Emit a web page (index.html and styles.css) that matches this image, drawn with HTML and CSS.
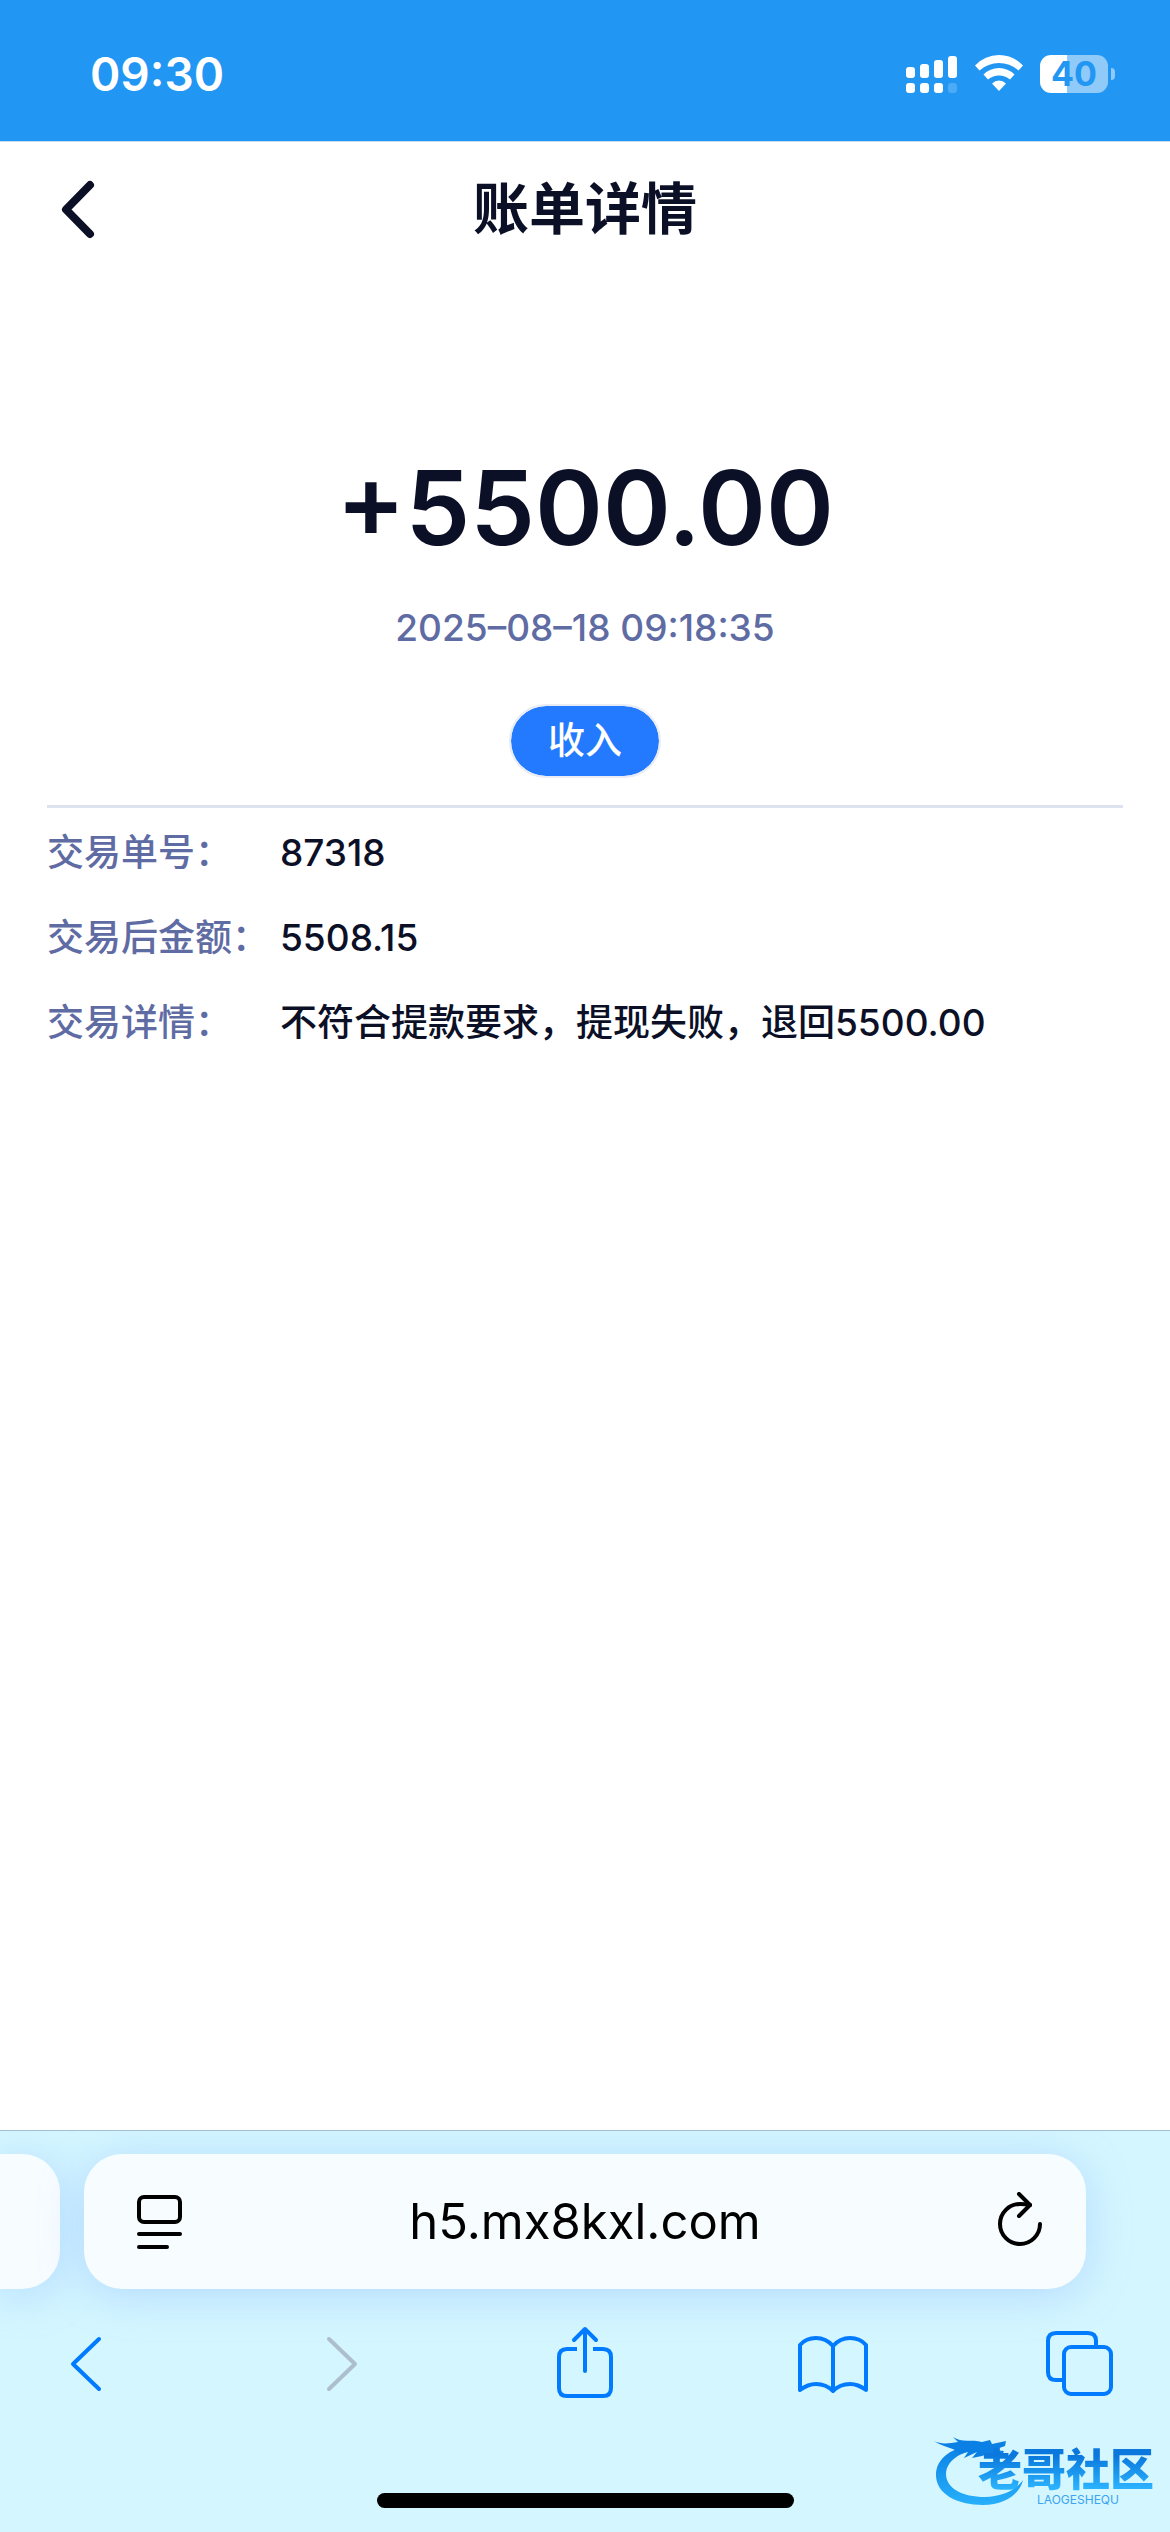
FILE: index.html
```html
<!DOCTYPE html>
<html lang="zh-CN">
<head>
    <meta charset="UTF-8">
    <meta name="viewport" content="width=device-width, initial-scale=1.0">
    <title>账单详情</title>
    <link rel="stylesheet" href="styles.css">
</head>

<body>
    <div class="status-bar">
        <span class="time">09:30</span>
        <div class="status-icons">
            <svg class="signal" width="52" height="38" viewBox="0 0 52 38" fill="#fff">
                <rect x="0" y="12" width="9" height="11" rx="3"/>
                <rect x="14" y="9" width="9" height="14" rx="3"/>
                <rect x="28" y="5" width="9" height="18" rx="3"/>
                <rect x="42" y="1" width="9" height="22" rx="3"/>
                <rect x="0" y="28" width="9" height="10" rx="3"/>
                <rect x="14" y="28" width="9" height="10" rx="3"/>
                <rect x="28" y="28" width="9" height="10" rx="3"/>
                <rect x="42" y="28" width="9" height="10" rx="3" opacity="0.2"/>
            </svg>
            <svg class="wifi" width="50" height="38" viewBox="0 0 50 38" fill="#fff">
                <path d="M1 10.500Q11 0 25 0Q39 0 49 10.500L44.500 15.500Q36 8 25 8Q14 8 5.500 15.500Z"/>
                <path d="M9.500 19.500Q16 13 25 13Q34 13 40.500 19.500L36 24.500Q31 20.500 25 20.500Q19 20.500 14 24.500Z"/>
                <path d="M18 28.500Q21 25.500 25 25.500Q29 25.500 32 28.500L25 36Z"/>
            </svg>
            <div class="battery"><span class="level">40</span><span class="cap"></span></div>
        </div>
    </div>

    <header class="header">
        <button type="button" class="back-btn" aria-label="返回">
            <svg width="60" height="60" viewBox="0 0 60 60" fill="none" stroke="#0b1027" stroke-width="8" stroke-linecap="round" stroke-linejoin="round">
                <path d="M42 6L18 30.500L42 55"/>
            </svg>
        </button>
        <h1>账单详情</h1>
    </header>

    <main class="bill">
        <div class="amount">+5500.00</div>
        <div class="date">2025–08–18 09:18:35</div>
        <div class="tag">收入</div>

        <dl class="details">
            <div class="row">
                <dt>交易单号：</dt>
                <dd>87318</dd>
            </div>
            <div class="row">
                <dt>交易后金额：</dt>
                <dd>5508.15</dd>
            </div>
            <div class="row">
                <dt>交易详情：</dt>
                <dd>不符合提款要求，提现失败，退回5500.00</dd>
            </div>
        </dl>
    </main>

    <footer class="browser">
        <div class="tabs">
            <div class="prev-tab"></div>
            <div class="address">
                <button type="button" aria-label="阅读模式">
                    <svg width="66" height="60" viewBox="0 0 66 60" fill="none" stroke="#000" stroke-width="4" stroke-linecap="round">
                        <rect x="19" y="5" width="41" height="25" rx="5"/>
                        <path d="M19 42H60M19 55H47"/>
                    </svg>
                </button>
                <input type="text" value="h5.mx8kxl.com" aria-label="网址">
                <button type="button" aria-label="刷新">
                    <svg width="66" height="60" viewBox="0 0 66 60" fill="none" stroke="#000" stroke-width="4" stroke-linecap="round" stroke-linejoin="round">
                        <path d="M56 32A20 20 0 1 1 36 12Q41 12 46 13"/>
                        <path d="M35 2L46 13L35 24"/>
                    </svg>
                </button>
            </div>
        </div>

        <nav class="toolbar">
            <button type="button" aria-label="后退">
                <svg width="72" height="80" viewBox="0 0 72 80"><path d="M49 15L23 40L49 65"/></svg>
            </button>
            <button type="button" class="off" aria-label="前进" disabled>
                <svg width="72" height="80" viewBox="0 0 72 80"><path d="M30 15L56 40L30 65"/></svg>
            </button>
            <button type="button" aria-label="分享">
                <svg width="72" height="80" viewBox="0 0 72 80">
                    <path stroke-linecap="butt" d="M30 25H20Q12 25 12 33V64Q12 72 20 72H56Q64 72 64 64V33Q64 25 56 25H46"/>
                    <path d="M38 5V47M27 16L38 5L49 16"/>
                </svg>
            </button>
            <button type="button" aria-label="书签">
                <svg width="72" height="80" viewBox="0 0 72 80">
                    <path d="M4 66V21Q10 14 20 14Q30 14 37 22Q44 14 54 14Q64 14 70 21V66Q62 60 54 60Q44 60 37 67Q30 60 20 60Q12 60 4 66ZM37 22V67"/>
                </svg>
            </button>
            <button type="button" aria-label="标签页">
                <svg width="72" height="80" viewBox="0 0 72 80">
                    <path stroke-linecap="butt" d="M52 23V17Q52 9 44 9H12Q4 9 4 17V48Q4 56 12 56H20"/>
                    <rect x="20" y="23" width="47" height="47" rx="7"/>
                </svg>
            </button>
        </nav>

        <div class="home-bar"></div>

        <div class="watermark">
            <svg width="92" height="76" viewBox="0 0 92 76">
                <defs>
                    <linearGradient id="ring" x1="0" y1="0" x2="0" y2="1">
                        <stop offset="0" stop-color="#0a80e4"/>
                        <stop offset="1" stop-color="#27b0fb"/>
                    </linearGradient>
                </defs>
                <path fill="url(#ring)" d="M45 14C20 17 4 28 4 45C4 64 25 75 51 75C72 75 88 64 91 50C84 60 70 67 53 67C30 67 14 58 14 44C14 32 26 22 50 18Z"/>
                <path fill="#0a80e4" d="M2 11C10 15 18 13 26 12L21 7C30 13 40 9 50 12L58 10L60 14L74 11L73 16L62 20L72 21L70 25L58 23L50 26L40 28L45 22L32 28L36 22L28 24C22 17 10 17 2 11Z"/>
            </svg>
            <div class="mark-text">
                <span class="mark-cn">老哥社区</span>
                <span class="mark-en">LAOGESHEQU</span>
            </div>
        </div>
    </footer>
</body>
</html>
```
FILE: styles.css
```css
* {
    box-sizing: border-box;
}

body {
    margin: 0;
    min-height: 100vh;
    display: flex;
    flex-direction: column;
    background: #fff;
    color: #0b1027;
    font-family: Inter, "Noto Sans CJK SC", sans-serif;
}

button {
    padding: 0;
    border: none;
    background: none;
}

svg {
    display: block;
}

/* phone status bar */
.status-bar {
    height: 142px;
    padding: 6px 62px 0 90px;
    display: flex;
    align-items: center;
    justify-content: space-between;
    background: #2196f3;
    border-bottom: 1px solid #c5dcee;
    color: #fff;
}

.time {
    font-size: 46px;
    font-weight: 600;
}

.status-icons {
    display: flex;
    align-items: center;
    gap: 16px;
}

.battery {
    position: relative;
    width: 68px;
    height: 38px;
    border-radius: 11px;
    background: linear-gradient(to right, #fff 40%, #90caf9 40%);
    color: #2196f3;
    text-align: center;
}

.level {
    display: block;
    font-size: 34px;
    font-weight: 700;
    line-height: 38px;
}

.cap {
    position: absolute;
    right: -7px;
    top: 13px;
    width: 4px;
    height: 12px;
    border-radius: 0 4px 4px 0;
    background: #90caf9;
}

/* page header */
.header {
    height: 134px;
    padding: 0 48px;
    display: grid;
    grid-template-columns: 60px 1fr 60px;
    align-items: center;
}

h1 {
    margin: 0;
    text-align: center;
    font-size: 56px;
    font-weight: 700;
    line-height: 80px;
}

/* bill */
.bill {
    flex: 1;
    padding: 172px 47px 48px;
    display: flex;
    flex-direction: column;
    align-items: center;
}

.amount {
    font-size: 103px;
    font-weight: 600;
    line-height: 120px;
}

.date {
    margin-top: 36px;
    color: #5f6ca3;
    font-size: 37px;
    font-weight: 500;
    line-height: 48px;
}

.tag {
    margin-top: 52px;
    padding: 0 37px;
    border: 2px solid #e9ecf3;
    border-radius: 37px;
    background: #237aff;
    background-clip: padding-box;
    color: #fff;
    font-size: 37px;
    font-weight: 500;
    line-height: 70px;
}

.details {
    align-self: stretch;
    margin: 27px 0 0;
    padding-top: 2px;
    border-top: 3px solid #dce3ef;
    font-size: 37px;
    font-weight: 500;
}

.row {
    display: flex;
    line-height: 85px;
}

dt {
    width: 233px;
    flex-shrink: 0;
    color: #5f6ca3;
    white-space: nowrap;
}

dd {
    margin: 0;
}

/* browser bottom bar */
.browser {
    position: relative;
    overflow: hidden;
    padding: 23px 0 24px;
    border-top: 1px solid #a3bdd2;
    background: #d4f6ff;
}

.tabs {
    display: flex;
    gap: 24px;
    padding-right: 84px;
}

.prev-tab,
.address {
    height: 135px;
    background: #f7fcff;
    box-shadow: 0 6px 44px rgba(120, 165, 255, 0.35);
}

.prev-tab {
    width: 60px;
    border-radius: 0 38px 38px 0;
}

.address {
    flex: 1;
    padding: 0 36px;
    display: flex;
    align-items: center;
    border-radius: 38px;
}

.address input {
    flex: 1;
    min-width: 0;
    padding: 0;
    border: none;
    outline: none;
    background: none;
    color: #000;
    font-family: inherit;
    font-size: 49px;
    text-align: center;
}

.toolbar {
    display: flex;
    justify-content: space-between;
    padding: 35px 54px 0 50px;
}

.toolbar svg {
    fill: none;
    stroke: #007aff;
    stroke-width: 4;
    stroke-linecap: round;
    stroke-linejoin: round;
}

.toolbar .off svg {
    stroke: #adbfce;
}

.home-bar {
    width: 417px;
    height: 15px;
    margin: 89px auto 0;
    border-radius: 8px;
    background: #000;
}

/* forum logo over the bar */
.watermark {
    position: absolute;
    right: 16px;
    bottom: 26px;
    display: flex;
    align-items: flex-end;
}

.mark-text {
    margin-left: -46px;
    display: flex;
    flex-direction: column;
    align-items: center;
}

.mark-cn {
    background: linear-gradient(#0a78dc 20%, #2cb4ff 90%);
    -webkit-background-clip: text;
    background-clip: text;
    color: transparent;
    font-size: 44px;
    font-weight: 900;
    line-height: 48px;
}

.mark-en {
    margin-left: 24px;
    color: #3aa5f0;
    font-size: 12px;
    line-height: 12px;
}
```
